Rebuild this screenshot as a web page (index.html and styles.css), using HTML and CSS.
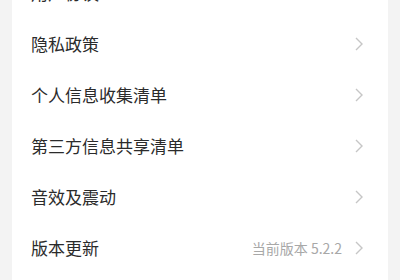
FILE: index.html
```html
<!DOCTYPE html>
<html lang="zh-CN">
<head>
    <meta charset="UTF-8">
    <meta name="viewport" content="width=device-width, initial-scale=1.0">
    <title>设置</title>
    <link rel="stylesheet" href="styles.css">
</head>
<body>

<div class="settings">
    <div class="row">
        <span class="label">用户协议</span>
        <svg class="arrow" width="8" height="14" viewBox="0 0 8 14"><path d="M1 1 L7 7 L1 13" /></svg>
    </div>
    <div class="row">
        <span class="label">隐私政策</span>
        <svg class="arrow" width="8" height="14" viewBox="0 0 8 14"><path d="M1 1 L7 7 L1 13" /></svg>
    </div>
    <div class="row">
        <span class="label">个人信息收集清单</span>
        <svg class="arrow" width="8" height="14" viewBox="0 0 8 14"><path d="M1 1 L7 7 L1 13" /></svg>
    </div>
    <div class="row">
        <span class="label">第三方信息共享清单</span>
        <svg class="arrow" width="8" height="14" viewBox="0 0 8 14"><path d="M1 1 L7 7 L1 13" /></svg>
    </div>
    <div class="row">
        <span class="label">音效及震动</span>
        <svg class="arrow" width="8" height="14" viewBox="0 0 8 14"><path d="M1 1 L7 7 L1 13" /></svg>
    </div>
    <div class="row">
        <span class="label">版本更新</span>
        <span class="value">当前版本 5.2.2</span>
        <svg class="arrow" width="8" height="14" viewBox="0 0 8 14"><path d="M1 1 L7 7 L1 13" /></svg>
    </div>
</div>

</body>
</html>
```

FILE: styles.css
```css
body {
    margin: 0;
    padding: 0 12px;
    background-color: #f3f3f3;
    font-family: "Noto Sans CJK SC", "Noto Sans", sans-serif;
}

.settings {
    margin-top: -33px;
    padding-bottom: 20px;
    background-color: #ffffff;
}

.row {
    display: flex;
    align-items: center;
    height: 51px;
    padding: 0 25px 0 19px;
}

.label {
    flex: 1;
    font-size: 17px;
    color: #2b2b2b;
}

.value {
    font-size: 14px;
    color: #a8a8a8;
    margin-right: 13px;
}

.arrow path {
    fill: none;
    stroke: #c6c6c6;
    stroke-width: 1.4;
}
```
